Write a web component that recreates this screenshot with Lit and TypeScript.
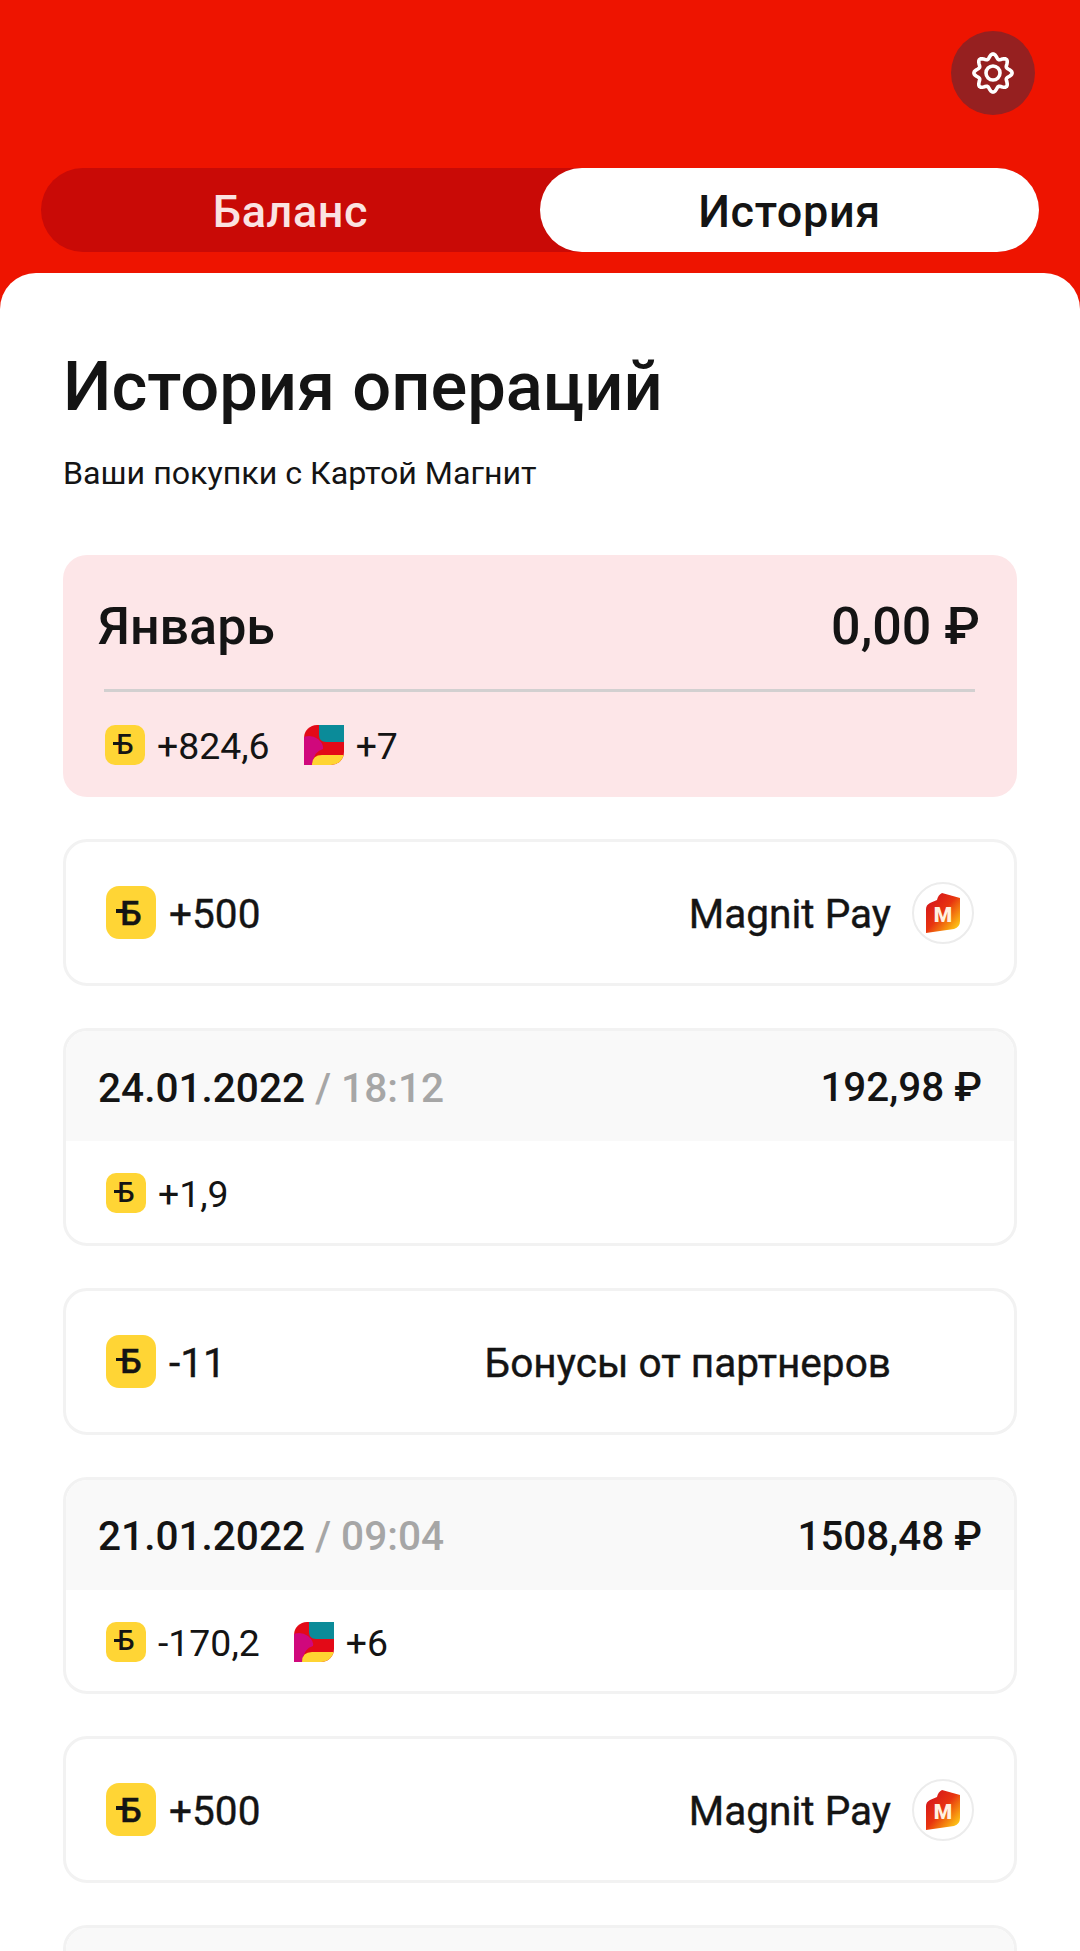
import { LitElement, html, css } from 'lit';
import { customElement } from 'lit/decorators.js';

// wavy outline for the settings gear, 8 lobes
const gearPath = () => {
  const pts: string[] = [];
  for (let i = 0; i < 96; i++) {
    const a = (i / 96) * Math.PI * 2;
    const r = 16.8 + 2.3 * Math.cos(8 * a);
    pts.push(`${(22 + r * Math.sin(a)).toFixed(2)} ${(22 - r * Math.cos(a)).toFixed(2)}`);
  }
  return `M${pts.join('L')}Z`;
};

const bonus = (large = false) => html`
  <span class="bonus ${large ? 'large' : ''}"><span class="bonus-letter">Б</span></span>
`;

const stickers = html`
  <svg class="stickers" viewBox="0 0 40 40">
    <defs><clipPath id="leaf"><path d="M13 0H40V27A13 13 0 0 1 27 40H0V13A13 13 0 0 1 13 0Z"/></clipPath></defs>
    <g clip-path="url(#leaf)">
      <rect width="40" height="40" fill="#e30a17"/>
      <path d="M0 40V12Q7 9 14 14Q20 19 19 24Q10 26 8 40Z" fill="#d0087c"/>
      <path d="M15 0H40V17H22Q15 17 15 10Z" fill="#0b8b99"/>
      <path d="M8 40Q8 30 18 30H40V40Z" fill="#ffd432"/>
    </g>
  </svg>
`;

const magnit = html`
  <span class="pay-logo">
    <svg viewBox="0 0 34 40" width="34" height="40">
      <defs>
        <linearGradient id="mg" x1="0.1" y1="0.1" x2="0.95" y2="0.95">
          <stop offset="0" stop-color="#d4141c"/>
          <stop offset="0.45" stop-color="#e8340f"/>
          <stop offset="0.75" stop-color="#f68f10"/>
          <stop offset="1" stop-color="#ffd81a"/>
        </linearGradient>
      </defs>
      <path d="M0 16Q0 12 4 10L11 7Q12 2 16 0L34 5V28Q34 34 28 36L0 40Z" fill="url(#mg)"/>
      <text class="pay-m" x="17" y="29" text-anchor="middle">M</text>
    </svg>
  </span>
`;

@customElement('app-root')
class AppRoot extends LitElement {
  static styles = css`
    :host {
      display: block;
      width: 1080px;
      height: 1951px;
      overflow: hidden;
      background: #ee1400;
      font-family: Roboto, sans-serif;
      color: #141414;
    }
    .top {
      display: flex;
      flex-direction: column;
      padding: 31px 45px 21px 41px;
    }
    .settings {
      align-self: flex-end;
      width: 84px;
      height: 84px;
      border-radius: 50%;
      background: #962020;
      display: flex;
      align-items: center;
      justify-content: center;
    }
    .tabs {
      display: flex;
      margin-top: 53px;
      height: 84px;
      border-radius: 42px;
      background: #c90a06;
      width: 998px;
    }
    .tab {
      flex: 1;
      display: flex;
      align-items: center;
      justify-content: center;
      padding-top: 3px;
      font-size: 45px;
      font-weight: 500;
      letter-spacing: 0.6px;
      color: #fbe3e1;
      border-radius: 42px;
    }
    .tab.active {
      background: #fff;
      color: #141414;
    }
    .sheet {
      background: #fff;
      border-radius: 36px 36px 0 0;
      padding: 76px 63px 0;
      height: 1700px;
    }
    h1 {
      margin: 0;
      font-size: 68.7px;
      line-height: 75px;
      font-weight: 500;
    }
    .sub {
      margin-top: 32px;
      font-size: 32.2px;
      line-height: 34px;
    }
    .list {
      margin-top: 65px;
      display: flex;
      flex-direction: column;
      gap: 42px;
    }
    .month {
      height: 242px;
      box-sizing: border-box;
      background: #fde6e8;
      border-radius: 24px;
      padding: 39px 36px 0 35px;
    }
    .month-head {
      display: flex;
      justify-content: space-between;
      align-items: center;
      height: 64px;
      font-size: 52px;
      font-weight: 500;
      padding-bottom: 31px;
      border-bottom: 3px solid #d2d0d0;
      margin: 0 6px 0 6px;
    }
    .month-head span:first-child { margin-left: -6px; }
    .month-head span:last-child { margin-right: -5px; }
    .points {
      display: flex;
      align-items: center;
      font-size: 37.4px;
      height: 40px;
      gap: 12px;
    }
    .points span:not(.bonus):not(.bonus-letter):not(.second) { padding-top: 2px; }
    .month .points { margin: 33px 0 0 7px; }
    .points .second { margin-left: 22px; display: flex; }
    .bonus {
      width: 40px;
      height: 40px;
      flex: none;
      border-radius: 10px;
      background: #ffd535;
      display: flex;
      align-items: center;
      justify-content: center;
    }
    .bonus-letter {
      position: relative;
      font-weight: 500;
      font-size: 27px;
      line-height: 1;
      color: #141414;
    }
    .bonus-letter::before {
      content: '';
      position: absolute;
      left: -0.12em;
      top: 0.4em;
      width: 0.22em;
      height: 0.11em;
      background: #141414;
    }
    .bonus.large {
      width: 50px;
      height: 53px;
      border-radius: 13px;
    }
    .bonus.large .bonus-letter { font-size: 34px; }
    .stickers { width: 40px; height: 40px; flex: none; }
    .card {
      border: 3px solid #f2f2f2;
      border-radius: 24px;
      background: #fff;
      overflow: hidden;
    }
    .pay {
      height: 147px;
      box-sizing: border-box;
      display: flex;
      align-items: center;
      padding: 0 40px;
      font-size: 40.6px;
      -webkit-text-stroke: 0.4px #141414;
    }
    .pay .amount { margin-left: 13px; flex: 1; padding-top: 3px; }
    .pay .name { padding-top: 3px; }
    .pay-logo {
      width: 62px;
      height: 62px;
      box-sizing: border-box;
      margin-left: 21px;
      border: 2px solid #ececec;
      border-radius: 50%;
      display: flex;
      align-items: center;
      justify-content: center;
    }
    .pay-logo svg { width: 34px; height: 40px; }
    .pay-m {
      font-family: Roboto, sans-serif;
      font-size: 21px;
      font-weight: 900;
      fill: #fff1e0;
      stroke: none;
    }
    .pay .partner { padding-right: 83px; }
    .check-head {
      height: 110px;
      box-sizing: border-box;
      background: #f9f9f9;
      display: flex;
      align-items: center;
      justify-content: space-between;
      padding: 3px 32px 0;
      font-size: 40.6px;
      font-weight: 500;
    }
    .check-head .sum { font-size: 40.4px; }
    .time { color: #a6a6a6; }
    .check-body { padding: 32px 0 0 40px; }
    .check { height: 217.6px; box-sizing: border-box; }
  `;

  private _pay(amount: string, name: string, logo = true) {
    return html`
      <div class="card pay">
        ${bonus(true)}
        <span class="amount">${amount}</span>
        <span class="name ${logo ? '' : 'partner'}">${name}</span>
        ${logo ? magnit : ''}
      </div>
    `;
  }

  private _check(date: string, time: string, sum: string, points: string, stickerPoints = '') {
    return html`
      <div class="card check">
        <div class="check-head">
          <span>${date} <span class="time">/ ${time}</span></span>
          <span class="sum">${sum}</span>
        </div>
        <div class="check-body">
          <div class="points">
            ${bonus()}<span>${points}</span>
            ${stickerPoints ? html`<span class="second">${stickers}</span><span>${stickerPoints}</span>` : ''}
          </div>
        </div>
      </div>
    `;
  }

  render() {
    return html`
      <div class="top">
        <div class="settings">
          <svg width="44" height="44" viewBox="0 0 44 44" fill="none" stroke="#fff" stroke-width="3.6" stroke-linejoin="round">
            <path d=${gearPath()}/>
            <circle cx="22" cy="22" r="7"/>
          </svg>
        </div>
        <div class="tabs">
          <div class="tab">Баланс</div>
          <div class="tab active">История</div>
        </div>
      </div>
      <div class="sheet">
        <h1>История операций</h1>
        <div class="sub">Ваши покупки с Картой Магнит</div>
        <div class="list">
          <div class="month">
            <div class="month-head"><span>Январь</span><span>0,00 ₽</span></div>
            <div class="points">
              ${bonus()}<span>+824,6</span>
              <span class="second">${stickers}</span><span>+7</span>
            </div>
          </div>
          ${this._pay('+500', 'Magnit Pay')}
          ${this._check('24.01.2022', '18:12', '192,98 ₽', '+1,9')}
          ${this._pay('-11', 'Бонусы от партнеров', false)}
          ${this._check('21.01.2022', '09:04', '1508,48 ₽', '-170,2', '+6')}
          ${this._pay('+500', 'Magnit Pay')}
          <div class="card check"><div class="check-head"></div></div>
        </div>
      </div>
    `;
  }
}
